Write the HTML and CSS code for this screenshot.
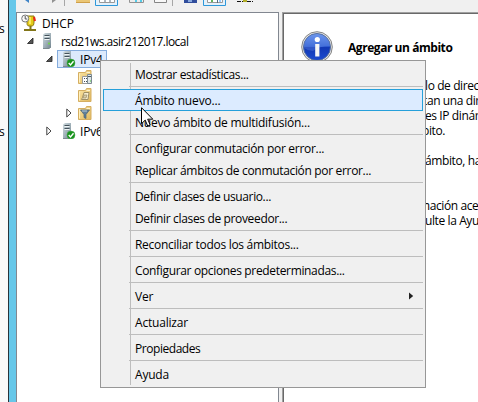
FILE: index.html
```html
<!DOCTYPE html>
<html lang="es">
<head>
<meta charset="utf-8">
<title>DHCP</title>
<link rel="stylesheet" href="styles.css">
</head>
<body>
<svg class="defs" aria-hidden="true">
  <defs>
    <linearGradient id="steel" x1="0" x2="1" y1="0" y2="1"><stop offset="0" stop-color="#d2dce0"/><stop offset=".5" stop-color="#a3b3bb"/><stop offset="1" stop-color="#71848e"/></linearGradient>
    <linearGradient id="gold" x1="0" x2="1" y1="0" y2="1"><stop offset="0" stop-color="#fbe7a8"/><stop offset="1" stop-color="#e0b75c"/></linearGradient>
    <linearGradient id="blue" x1="0" x2="0" y1="0" y2="1"><stop offset="0" stop-color="#5f8be8"/><stop offset=".48" stop-color="#2b59cf"/><stop offset=".52" stop-color="#1238b4"/><stop offset="1" stop-color="#1c4bd0"/></linearGradient>
    <g id="tower">
      <path d="M4 1.500 6 0h6v14l-2 1.500H4z" fill="url(#steel)"/>
      <path d="M4 15.500h6L12 14" fill="none" stroke="#7c898f"/>
      <path d="M5.500 2.500h5M5.500 5.500h5" stroke="#44525b"/>
      <path d="M5.500 3.500h5M5.500 6.500h5" stroke="#eef4f5"/>
    </g>
    <g id="check">
      <circle cx="12" cy="12" r="4" fill="#18931d" stroke="#4aa650" stroke-width=".5"/>
      <path d="m9.700 12 1.800 1.900 3-3.700" fill="none" stroke="#fff" stroke-width="1.400"/>
    </g>
    <g id="folder">
      <path d="M.500 3.500h7l1-2h4.500v13H.500z" fill="url(#gold)" stroke="#d5ae61"/>
      <path d="M8.500 3.500H12" stroke="#fff3ca"/>
      <path d="M1.500 4.500v9" stroke="#fff0bd"/>
    </g>
  </defs>
</svg>
<div class="desktop">
  <aside class="outside"><span class="edge first">s</span><span class="edge second">s</span></aside>
  <div class="frame"></div>
  <main class="console">
    <div class="toolbar">
      <svg width="461" height="12" viewBox="17 0 461 12">
        <path d="m25 0 4 3V0z" fill="#3e83c6"/><path d="M52 3V0h4z" fill="#929292"/>
        <path d="M64.500 0v6M172.500 0v6" stroke="#a7a7a7"/>
        <path d="M76 0h14v3H76z" fill="#eac675"/><path d="M76 2.500h14" stroke="#cf9f49"/>
        <path d="M95.500-1h22v6.500h-22z" fill="#e4f1fb" stroke="#2e98da"/>
        <path d="M99.500-1h15v3.500h-15z" fill="#fff" stroke="#999"/><path d="M105 0v2M110 0v2" stroke="#5a7184"/>
        <path d="M129.500-1h14v3.500h-14z" fill="#ececec" stroke="#929292"/><path d="M136 0v2M141 0v2" stroke="#55cbe8" stroke-width="2"/>
        <path d="M154.500-1h12v3.500h-12z" fill="#f8f8f8" stroke="#858585"/>
        <path d="M184 0h13v3h-13z" fill="#304d9c"/><path d="M188 0h4v2h-4z" fill="#8aaade"/>
        <path d="M203.500-1h22v6.500h-22z" fill="#e4f1fb" stroke="#2e98da"/>
        <path d="M207.500-1h15v3.500h-15z" fill="#fff" stroke="#999"/><path d="M212 0v2" stroke="#63b35d" stroke-width="2"/><path d="M217.500 0v3" stroke="#536c80"/><path d="M219 1h2" stroke="#39f"/>
        <path d="M237 1.500h16" stroke="#111" stroke-dasharray="4 1"/><path d="M243 0h4v2h-4z" fill="#b1ad27"/>
      </svg>
    </div>
    <div class="panes">
      <section class="tree">
        <div class="node root"><svg class="ico" viewBox="0 0 16 18"><path d="M6 2h7v6c0 3-1 4-2 4H8c-2 0-2-2-2-4z" fill="#e5cb18" stroke="#8c7b15"/><path d="M9.500 12v3M3 16h12" stroke="#827519" stroke-width="2"/><path d="M13 3l1 4" stroke="#ec2618" stroke-width="2"/><path d="M9 3v7" stroke="#fff47c" stroke-width="1.500"/><circle cx="4.200" cy="4.500" r="3.500" fill="#f9f9f9" stroke="#777"/><path d="M4.200 2v3h2" fill="none" stroke="#555"/></svg><span>DHCP</span></div>
        <div class="node server"><svg class="arrow" viewBox="0 0 7 8"><path d="M6 1v5.500H.500z" fill="#555" stroke="#222" stroke-width=".8"/></svg><svg class="ico" viewBox="0 0 16 16"><use href="#tower"/><circle cx="10" cy="10.500" r="1" fill="#6edb42"/></svg><span>rsd21ws.asir212017.local</span></div>
        <div class="node protocol"><svg class="arrow" viewBox="0 0 7 8"><path d="M6 1v5.500H.500z" fill="#555" stroke="#222" stroke-width=".8"/></svg><div class="label selected"><svg class="ico" viewBox="0 0 16 16"><use href="#tower" x="-3"/><use href="#check" x="-3"/></svg><span>IPv4</span></div></div>
        <div class="node child"><svg class="ico" viewBox="0 0 16 16"><use href="#folder"/><path d="M4.500 7.500h5v7h-5z" fill="#fff" stroke="#9a9a9a"/><path d="M6 9.500h3M6 12.500h3" stroke="#46515a" stroke-dasharray="1 1"/><path d="M9.500 5.500h4v9h-4z" fill="#dfe6e8" stroke="#7d8b93"/><path d="M10 7.500h3" stroke="#4d5c64"/><path d="M12 12h1" stroke="#49be35"/></svg></div>
        <div class="node child"><svg class="ico" viewBox="0 0 16 16"><use href="#folder"/><path d="M6 5.500h5l-1 7H3.500l1-2z" fill="#f6edcf" stroke="#9f8f65"/><path d="M5 11h3l1-3H6z" fill="#d5cba7" stroke="#9f8f65" stroke-width=".7"/></svg></div>
        <div class="node child"><svg class="arrow closed" viewBox="0 0 6 10"><path d="M.8 1v8L5 5z" fill="#fff" stroke="#444"/></svg><svg class="ico" viewBox="0 0 16 16"><use href="#folder"/><path d="M2.500 5h9L8 9.500v4l-2-1v-3z" fill="#607f99" stroke="#496274" stroke-width=".7"/><path d="M4 6h5" stroke="#b6ccd9"/></svg></div>
        <div class="node protocol"><svg class="arrow closed" viewBox="0 0 6 10"><path d="M.8 1v8L5 5z" fill="#fff" stroke="#444"/></svg><div class="label"><svg class="ico" viewBox="0 0 16 16"><use href="#tower" x="-3"/><use href="#check" x="-3"/></svg><span>IPv6</span></div></div>
      </section>
      <section class="detail">
        <header><svg class="info" viewBox="0 0 32 32"><circle cx="16" cy="16" r="15.300" fill="#e6e6e6" stroke="#777" stroke-width=".9"/><circle cx="16" cy="16" r="13.500" fill="url(#blue)" stroke="#536d9e"/><path d="M3 17a13 13 0 0 1 26-2Q18 15 12 20 7 20 3 17" fill="#9ec0ff" opacity=".22"/><circle cx="16.300" cy="8.500" r="2.600" fill="#fff"/><path d="M14.200 13h4.200v12.500h-4.200z" fill="#f6f6f6"/></svg><h1>Agregar un ámbito</h1></header>
        <div class="copy">
          <p class="para"><span>lo de direc</span><span class="back2">tan una dir</span><span>es IP dinár</span><span class="back3">bito.</span></p>
          <p class="para"><span>ámbito, ha</span></p>
          <p class="para last"><span class="back4">mación ace</span><span>ulte la Ayu</span></p>
        </div>
      </section>
    </div>
  </main>
</div>
<nav class="menu">
  <ul><li class="w1">Mostrar estadísticas...</li></ul>
  <ul><li class="active w2">Ámbito nuevo...</li><li class="w3">Nuevo ámbito de multidifusión...</li></ul>
  <ul><li class="w4">Configurar conmutación por error...</li><li class="w5">Replicar ámbitos de conmutación por error...</li></ul>
  <ul><li class="w6">Definir clases de usuario...</li><li class="w7">Definir clases de proveedor...</li></ul>
  <ul><li class="w8">Reconciliar todos los ámbitos...</li></ul>
  <ul><li class="w9">Configurar opciones predeterminadas...</li></ul>
  <ul><li class="sub"><span>Ver</span><svg width="5" height="8" viewBox="0 0 5 8"><path d="M0 .5v7L4.200 4z" fill="#222"/></svg></li></ul>
  <ul><li>Actualizar</li></ul>
  <ul><li class="w10">Propiedades</li></ul>
  <ul><li>Ayuda</li></ul>
</nav>
<svg class="cursor" viewBox="0 0 13 20"><path d="M.5.700v16l3.700-3.600 2.500 5.900 2.500-1-2.500-5.800h5.100z" fill="#fff" stroke="#000"/></svg>
</body>
</html>
```

FILE: styles.css
```css
* { box-sizing: border-box; }
body { margin: 0; width: 478px; height: 402px; overflow: hidden; position: relative; font: 12px/15px "Open Sans", "Noto Sans", sans-serif; letter-spacing: -.2px; color: #000; background: #fff; }
ul, p, h1 { margin: 0; padding: 0; list-style: none; }
span { white-space: nowrap; }
.defs { position: absolute; width: 0; height: 0; }
.desktop { display: flex; height: 402px; }
.outside { width: 8px; flex: none; background: #f9f9f9; overflow: hidden; display: flex; flex-direction: column; padding-top: 21px; gap: 88px; }
.edge { margin-left: -1px; height: 15px; }
.frame { width: 8px; flex: none; background: #66c7e9; border-left: 1px solid #28333a; }
.console { width: 462px; flex: none; display: flex; flex-direction: column; background: #f0f0f0; }
.toolbar { height: 12px; padding-left: 1px; }
.toolbar svg { display: block; }
.panes { flex: 1; display: flex; gap: 3px; }
.tree { width: 263px; background: #fff; border: 1px solid #828790; border-bottom: 0; padding-top: 1px; }
.node { height: 18px; display: flex; align-items: center; }
.ico { width: 16px; height: 16px; flex: none; display: block; }
.arrow { width: 7px; height: 8px; flex: none; }
.arrow.closed { width: 6px; height: 10px; }
.root { padding-left: 4px; }
.root .ico { height: 18px; }
.root span { margin-left: 5px; letter-spacing: -.1px; }
.server { padding-left: 10px; }
.server .ico { margin-left: 5px; }
.server span { margin-left: 6px; letter-spacing: -.53px; }
.protocol { padding-left: 29px; }
.protocol .label { width: 50px; height: 18px; margin-left: 4px; padding-left: 4px; display: flex; align-items: center; border: 1px solid transparent; }
.protocol .closed + .label { margin-left: 5px; }
.protocol .label span { margin-left: 2px; }
.protocol .selected { background: #dceafc; border-color: #84acdd; }
.child { padding-left: 61px; }
.child:has(.arrow) { padding-left: 49px; }
.child .arrow + .ico { margin-left: 6px; }
.detail { flex: 1; min-width: 0; background: #fff; border-top: 1px solid #a0a0a0; border-left: 1px solid #a0a0a0; box-shadow: inset 1px 1px #696969; padding: 1px 0 0 1px; overflow: hidden; }
.detail header { padding: 17px 0 0 17px; height: 64px; display: flex; gap: 15px; }
.info { width: 32px; height: 32px; flex: none; }
h1 { font-size: 12px; line-height: 34px; font-weight: 700; letter-spacing: -.45px; white-space: nowrap; }
.copy { padding-left: 141px; letter-spacing: -.4px; }
.para { display: flex; flex-direction: column; margin-bottom: 15px; }
.para.last { margin-top: 30px; }
.back2 { margin-left: -2px; }
.back3 { margin-left: -3px; }
.back4 { margin-left: -6px; }
.menu { position: absolute; left: 100px; top: 60px; width: 326px; height: 328px; padding: 2px; border: 1px solid #979797; background: linear-gradient(#bdbdbd, #bdbdbd) 29px 2px / 1px 322px no-repeat #f0f0f0; }
.menu ul + ul { border-top: 1px solid #bdbdbd; margin-top: 1px; padding-top: 2px; border-image: linear-gradient(90deg, transparent 27px, #bdbdbd 27px) 1; }
.menu li { height: 22px; padding-left: 32px; line-height: 23px; white-space: nowrap; }
.menu .active { background: #dcebff; border: 1px solid #26a0da; line-height: 21px; padding-left: 31px; }
.menu .sub { display: flex; align-items: center; justify-content: space-between; padding-right: 9px; }
.menu .w1 { letter-spacing: -.37px; }
.menu .w2 { letter-spacing: -.15px; }
.menu .w3 { letter-spacing: -.25px; }
.menu .w4 { letter-spacing: -.3px; }
.menu .w5 { letter-spacing: -.33px; }
.menu .w6 { letter-spacing: -.38px; }
.menu .w7 { letter-spacing: -.35px; }
.menu .w8 { letter-spacing: -.29px; }
.menu .w9 { letter-spacing: -.34px; }
.menu .w10 { letter-spacing: -.45px; }
.cursor { position: absolute; left: 141px; top: 107px; width: 13px; height: 20px; }
```
